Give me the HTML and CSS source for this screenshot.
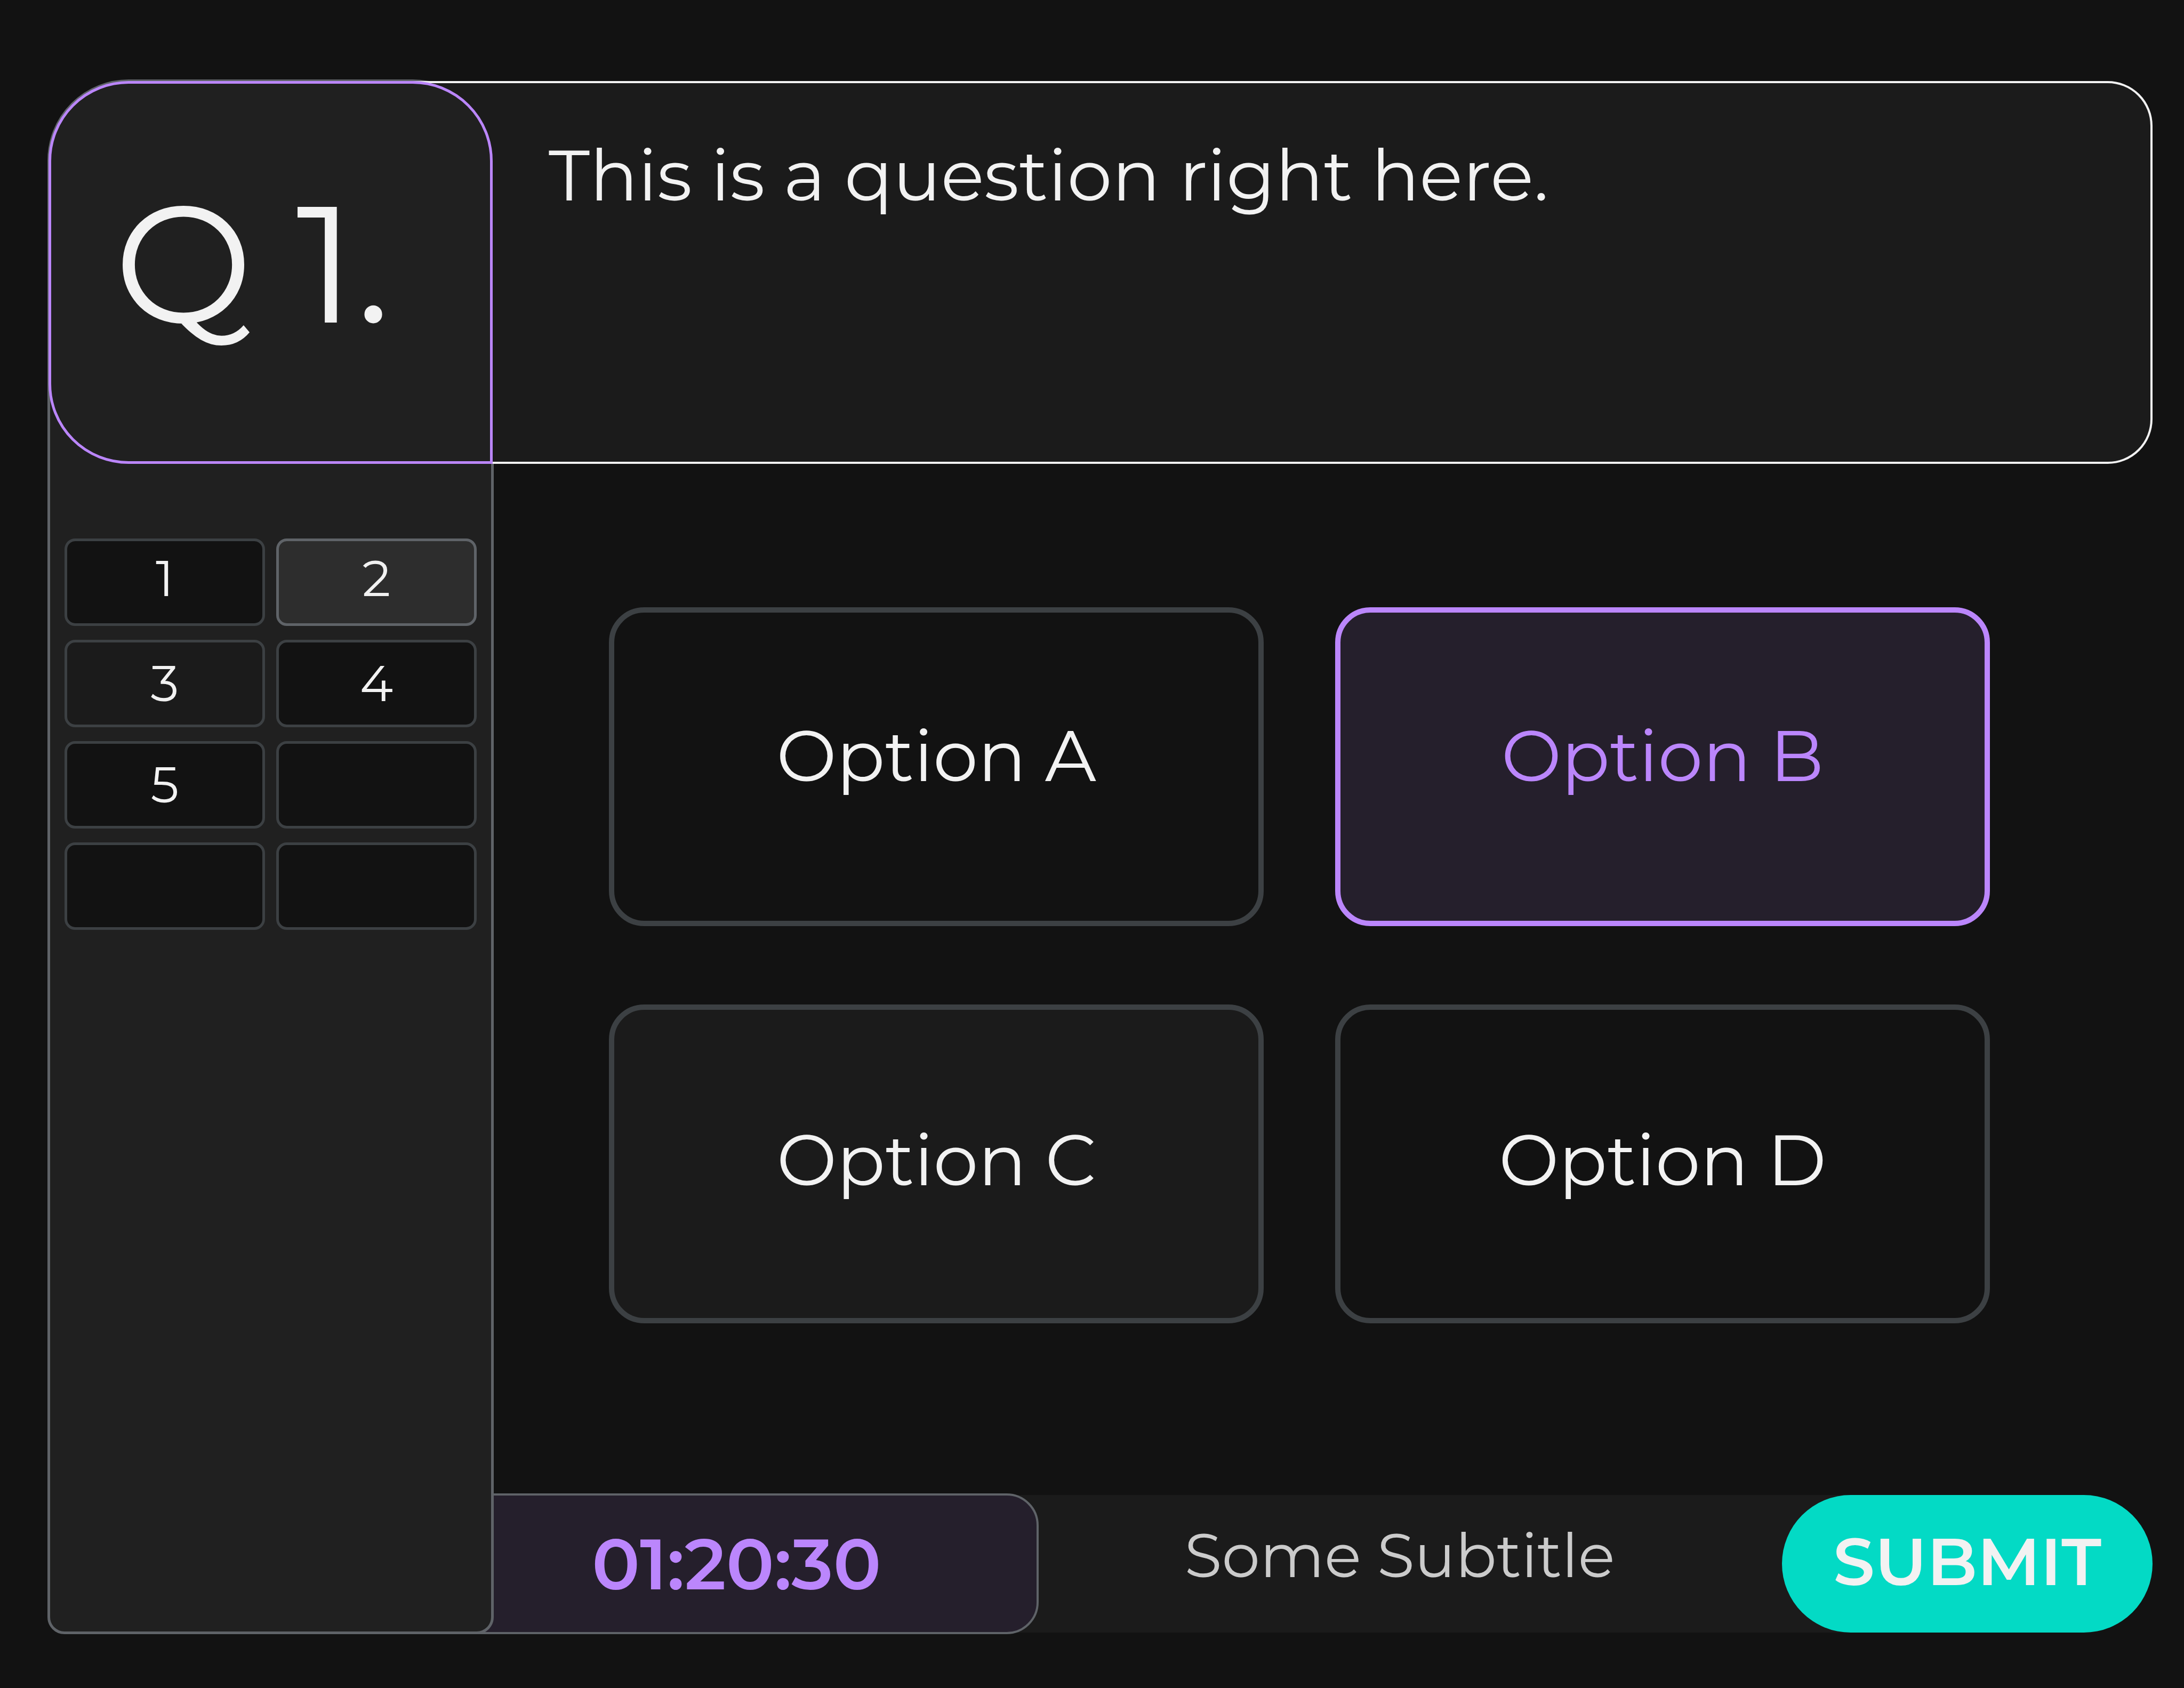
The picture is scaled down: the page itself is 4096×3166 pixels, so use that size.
FILE: index.html
```html
<!DOCTYPE html>
<html lang="en">
<head>
<meta charset="utf-8">
<title>Quiz</title>
<link rel="stylesheet" href="styles.css">
</head>
<body>
<div class="quiz">
  <aside class="sidebar">
    <h1 class="number">Q 1.</h1>
    <nav class="pager" aria-label="Questions">
      <button class="page" type="button">1</button>
      <button class="page page-current" type="button">2</button>
      <button class="page page-seen" type="button">3</button>
      <button class="page" type="button">4</button>
      <button class="page" type="button">5</button>
      <button class="page" type="button" aria-label="Empty"></button>
      <button class="page" type="button" aria-label="Empty"></button>
      <button class="page" type="button" aria-label="Empty"></button>
    </nav>
  </aside>
  <main class="main">
    <section class="question"><p class="question-text">This is a question right here.</p></section>
    <section class="options">
      <button class="option option-upper" type="button">Option A</button>
      <button class="option option-upper option-selected" type="button">Option B</button>
      <button class="option option-seen" type="button">Option C</button>
      <button class="option" type="button">Option D</button>
    </section>
    <footer class="footer">
      <div class="timer">01:20:30</div>
      <p class="subtitle">Some Subtitle</p>
      <button class="submit" type="button">SUBMIT</button>
    </footer>
  </main>
</div>
</body>
</html>
```
FILE: styles.css
```css
* {
  box-sizing: border-box;
}

body {
  margin: 0;
  background: #121212;
  color: #f2f2f2;
  font-family: Montserrat, Inter, "Open Sans", sans-serif;
  font-weight: 400;
}

h1,
p {
  margin: 0;
  font-weight: inherit;
}

button {
  margin: 0;
  padding: 0;
  color: inherit;
  font: inherit;
  cursor: pointer;
}

.quiz {
  display: grid;
  grid-template-columns: 837px minmax(0, 1fr);
  min-height: 100vh;
  padding: 149px 59px 101px 89px;
}

/* Stacking, bottom to top: timer, sidebar, question panel, question number */
.sidebar {
  position: relative;
  border: 5px solid #5f6368;
  border-radius: 152px 152px 32px 32px;
  background: #202020;
}

.number {
  position: relative;
  z-index: 2;
  display: flex;
  align-items: center;
  height: 718px;
  margin: -2px -3px 0;
  padding: 0 0 34px 118px;
  border: 5px solid #bb86fc;
  border-radius: 150px 150px 0 150px;
  background: #202020;
  font-size: 310px;
  line-height: 380px;
}

.pager {
  display: grid;
  grid-template-columns: 1fr 1fr;
  gap: 26px 21px;
  padding: 140px 27px;
}

.page {
  height: 164px;
  border: 5px solid #3c4043;
  border-radius: 20px;
  background: #121212;
  font-size: 94px;
  line-height: 112px;
}

.page:nth-child(-n+2) {
  padding-bottom: 14px;
}

.page-current {
  border-color: #5f6368;
  background: #2d2d2d;
}

.page-seen {
  background: #1b1b1b;
}

.main {
  display: flex;
  flex-direction: column;
}

.question {
  position: relative;
  z-index: 1;
  height: 718px;
  margin: 3px 0 0 -170px;
  padding: 92px 96px 92px 269px;
  border: 4px solid #f2f2f2;
  border-radius: 0 84px 84px 0;
  background: #1b1b1b;
}

.question-text {
  font-size: 134px;
  line-height: 160px;
}

.options {
  display: grid;
  flex: 1;
  grid-template-columns: 1fr 1fr;
  align-content: start;
  gap: 147px 134px;
  padding: 269px 305px 160px 216px;
}

.option {
  height: 598px;
  padding-bottom: 16px;
  border: 10px solid #3c4043;
  border-radius: 66px;
  background: #121212;
  font-size: 134px;
  line-height: 160px;
}

.option-upper {
  padding-bottom: 42px;
}

.option-selected {
  border-color: #bb86fc;
  background: #251f2c;
  color: #bb86fc;
}

.option-seen {
  background: #1b1b1b;
}

.footer {
  display: flex;
  align-items: center;
  background: linear-gradient(#1b1b1b, #1b1b1b) no-repeat left / calc(100% - 130px) 258px;
}

.timer {
  width: 1062px;
  height: 264px;
  margin-left: -40px;
  padding-left: 220px;
  border: 4px solid #5f6368;
  border-radius: 0 60px 60px 0;
  background: #251f2c;
  color: #bb86fc;
  font-size: 134px;
  font-weight: 600;
  line-height: 256px;
}

.subtitle {
  flex: 1;
  padding: 0 40px 30px 0;
  color: #cbcbcb;
  font-size: 114px;
  line-height: 136px;
  text-align: center;
}

.submit {
  width: 695px;
  height: 258px;
  padding-bottom: 8px;
  border: 0;
  border-radius: 129px;
  background: #03dac5;
  font-size: 124px;
  font-weight: 600;
  line-height: 160px;
}
```
